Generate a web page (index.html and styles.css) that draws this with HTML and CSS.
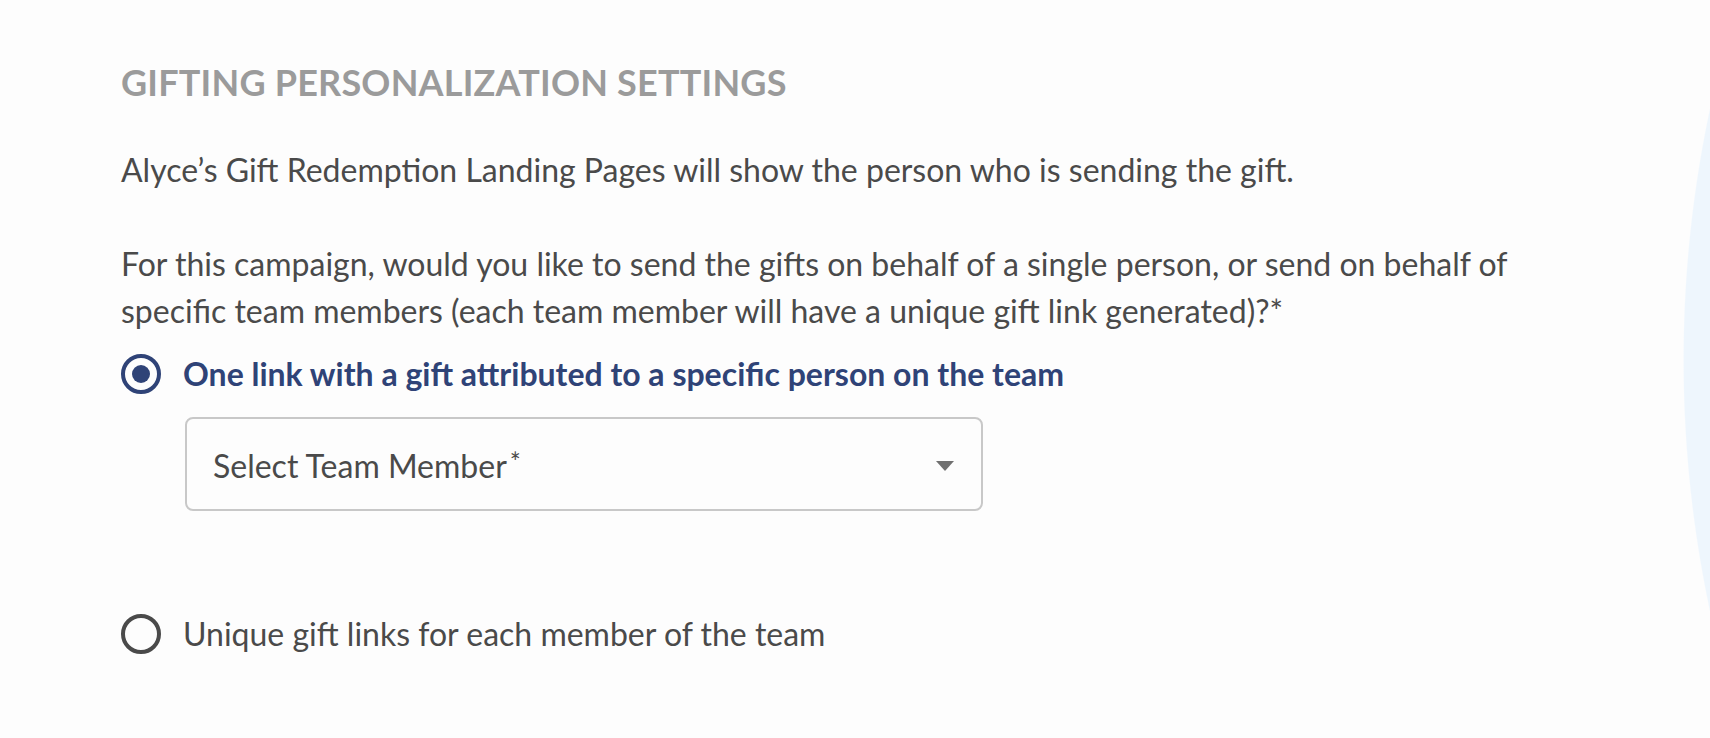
FILE: index.html
```html
<!DOCTYPE html>
<html lang="en">
<head>
<meta charset="utf-8">
<title>Gifting Personalization Settings</title>
<link rel="stylesheet" href="styles.css">
</head>
<body>
<main class="panel">
  <h2 class="title">GIFTING PERSONALIZATION SETTINGS</h2>
  <p class="text">Alyce’s Gift Redemption Landing Pages will show the person who is sending the gift.</p>
  <p class="text question">For this campaign, would you like to send the gifts on behalf of a single person, or send on behalf of<br>specific team members (each team member will have a unique gift link generated)?*</p>
  <div class="options">
    <label class="option checked">
      <span class="radio"><span class="dot"></span></span>
      <span class="option-label">One link with a gift attributed to a specific person on the team</span>
    </label>
    <div class="select">
      <span class="select-label">Select Team Member<span class="req">*</span></span>
      <svg class="caret" width="18" height="10" viewBox="0 0 18 10"><path d="M0 0 L18 0 L9 10 Z" fill="#707070"/></svg>
    </div>
    <label class="option second">
      <span class="radio"></span>
      <span class="option-label">Unique gift links for each member of the team</span>
    </label>
  </div>
</main>
</body>
</html>
```
FILE: styles.css
```css
html, body {
  margin: 0;
  padding: 0;
  overflow: hidden;
  height: 100%;
}
body {
  font-family: Lato, "Open Sans", sans-serif;
  color: #4a4a4a;
  background: radial-gradient(circle 1208px at 2891px 360px, #eef6fd 99.9%, #fdfdfd 100%);
}
.panel {
  padding: 60px 0 0 121px;
}
.title {
  margin: 0;
  font-size: 36px;
  line-height: 44px;
  font-weight: 700;
  color: #9b9b9b;
  letter-spacing: 0.2px;
}
.text {
  margin: 42px 0 0;
  font-size: 32px;
  line-height: 47px;
}
.question {
  margin-top: 47px;
}
.options {
  margin-top: 20px;
}
.option {
  display: flex;
  align-items: center;
  gap: 22px;
  height: 40px;
}
.radio {
  width: 32px;
  height: 32px;
  border: 4px solid #4a4a4a;
  border-radius: 50%;
  display: flex;
  align-items: center;
  justify-content: center;
  flex: none;
}
.checked .radio {
  border-color: #2f4377;
}
.dot {
  width: 18px;
  height: 18px;
  border-radius: 50%;
  background: #2f4377;
}
.option-label {
  font-size: 32px;
  line-height: 40px;
}
.checked .option-label {
  font-weight: 700;
  color: #2f4377;
}
.select {
  margin: 23px 0 0 64px;
  width: 798px;
  height: 94px;
  border: 2px solid #c8c8c8;
  border-radius: 8px;
  display: flex;
  align-items: center;
  justify-content: space-between;
  padding: 4px 27px 0 26px;
  box-sizing: border-box;
}
.select-label {
  font-size: 32px;
  line-height: 40px;
  color: #4a4a4a;
}
.req {
  font-size: 26px;
  vertical-align: top;
  margin-left: 3px;
  position: relative;
  top: -4px;
}
.second {
  margin-top: 103px;
}
```
